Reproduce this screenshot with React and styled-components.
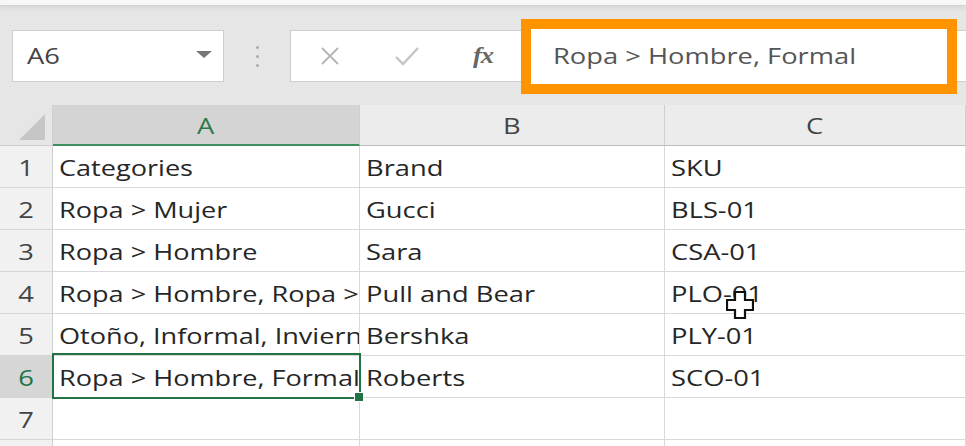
import React from 'react';
import styled, { createGlobalStyle } from 'styled-components';

const Global = createGlobalStyle`
  body {
    margin: 0;
    background: #e6e6e6;
  }
`;

const Window = styled.div`
  width: 966px;
  height: 446px;
  overflow: hidden;
  background: #e6e6e6;
  font-family: 'Open Sans', 'Liberation Sans', sans-serif;
  position: relative;
`;

// the capture is stretched sideways, so glyphs are widened to match
const Wide = styled.span`
  display: inline-block;
  white-space: nowrap;
  transform: scaleX(${(p) => p.$k || 1.3});
  transform-origin: ${(p) => (p.$center ? 'center' : 'left')} center;
`;

const TopStrip = styled.div`
  height: 5px;
  background: #f7f7f7;
  border-bottom: 1px solid #d2d2d2;
  box-shadow: 0 2px 5px rgba(0, 0, 0, 0.08);
`;

const Toolbar = styled.div`
  display: flex;
  align-items: center;
  height: 52px;
  margin-top: 24px;
  padding-left: 12px;
`;

const NameBox = styled.div`
  box-sizing: border-box;
  width: 212px;
  height: 52px;
  background: #fff;
  border: 1px solid #cdcdcd;
  display: flex;
  align-items: center;
  justify-content: space-between;
  padding: 0 11px 0 14px;
  font-size: 21px;
  color: #444;
`;

const Caret = styled.span`
  width: 0;
  height: 0;
  border-left: 8px solid transparent;
  border-right: 8px solid transparent;
  border-top: 7px solid #777;
  margin-bottom: 3px;
`;

const Grip = styled.div`
  width: 66px;
  display: flex;
  flex-direction: column;
  align-items: center;
  gap: 6px;
  span {
    width: 3px;
    height: 3px;
    border-radius: 50%;
    background: #aaa;
  }
`;

const FormulaBar = styled.div`
  flex: 1;
  box-sizing: border-box;
  height: 52px;
  background: #fff;
  border: 1px solid #cdcdcd;
  border-right: none;
  display: flex;
  align-items: center;
`;

const IconSlot = styled.div`
  width: 77px;
  display: flex;
  justify-content: center;
  align-items: center;
`;

const Fx = styled.span`
  font-family: 'Liberation Serif', serif;
  font-style: italic;
  font-weight: bold;
  font-size: 23px;
  color: #666;
  letter-spacing: -1px;
  margin-right: 4px;
`;

const FormulaInput = styled.div`
  box-sizing: border-box;
  width: 416px;
  height: 55px;
  margin-left: 9px;
  background: #fff;
  outline: 10px solid #ff9400;
  display: flex;
  align-items: center;
  padding-left: 22px;
  font-size: 21px;
  color: #555;
`;

const Sheet = styled.div`
  display: grid;
  grid-template-columns: 53px 307px 305px 1fr;
  grid-template-rows: 41px repeat(8, 42px);
  margin-top: 23px;
`;

const Corner = styled.div`
  background: #e6e6e6;
  border-right: 1px solid #cfcfcf;
  border-bottom: 1px solid #cfcfcf;
  display: flex;
  align-items: flex-end;
  justify-content: flex-end;
  padding: 0 7px 5px 0;
  svg {
    display: block;
  }
`;

const ColHead = styled.div`
  background: ${(p) => (p.$active ? '#d4d4d4' : '#ececec')};
  border-right: 1px solid #cfcfcf;
  border-bottom: ${(p) => (p.$active ? '2px solid #3f8f5f' : '1px solid #bdbdbd')};
  display: flex;
  align-items: center;
  justify-content: center;
  font-size: 21px;
  color: ${(p) => (p.$active ? '#2e7a4c' : '#444')};
  padding-top: 2px;
`;

const RowHead = styled.div`
  background: ${(p) => (p.$active ? '#d6d6d6' : '#f1f1f1')};
  border-right: ${(p) => (p.$active ? '1px solid #217346' : '1px solid #cfcfcf')};
  border-bottom: 1px solid #d6d6d6;
  display: flex;
  align-items: flex-end;
  justify-content: center;
  padding-bottom: 5px;
  font-size: 21px;
  color: ${(p) => (p.$active ? '#217346' : '#444')};
`;

const Cell = styled.div`
  position: relative;
  background: #fff;
  border-right: 1px solid #d9d9d9;
  border-bottom: 1px solid #d9d9d9;
  display: flex;
  align-items: flex-end;
  min-width: 0;
  font-size: 21px;
  color: #262626;
  z-index: ${(p) => (p.$selected ? 2 : 1)};
`;

const CellText = styled.div`
  flex: 1;
  min-width: 0;
  overflow: hidden;
  padding: 0 0 5px 6px;
`;

const Selection = styled.div`
  position: absolute;
  left: -1px;
  top: -3px;
  right: -2px;
  bottom: -2px;
  border: 2px solid #217346;
  pointer-events: none;
`;

const Handle = styled.div`
  position: absolute;
  right: -5px;
  bottom: -5px;
  width: 8px;
  height: 8px;
  background: #217346;
  border: 1px solid #fff;
`;

const CursorMark = styled.svg`
  position: absolute;
  left: 726px;
  top: 291px;
  z-index: 5;
`;

const rows = [
  ['Categories', 'Brand', 'SKU'],
  ['Ropa > Mujer', 'Gucci', 'BLS-01'],
  ['Ropa > Hombre', 'Sara', 'CSA-01'],
  ['Ropa > Hombre, Ropa > Mujer', 'Pull and Bear', 'PLO-01'],
  ['Otoño, Informal, Invierno', 'Bershka', 'PLY-01'],
  ['Ropa > Hombre, Formal', 'Roberts', 'SCO-01'],
  ['', '', ''],
  ['', '', ''],
];

export default function App() {
  return (
    <Window>
      <Global />
      <TopStrip />
      <Toolbar>
        <NameBox>
          <Wide>A6</Wide>
          <Caret />
        </NameBox>
        <Grip>
          <span />
          <span />
          <span />
        </Grip>
        <FormulaBar>
          <IconSlot>
            <svg width="20" height="20" viewBox="0 0 20 20">
              <path d="M2 2 L18 18 M18 2 L2 18" stroke="#b4b4b4" strokeWidth="1.8" fill="none" />
            </svg>
          </IconSlot>
          <IconSlot>
            <svg width="26" height="22" viewBox="0 0 26 22">
              <path d="M2 12 L9 19 L24 3" stroke="#c4c4c4" strokeWidth="2.4" fill="none" />
            </svg>
          </IconSlot>
          <IconSlot>
            <Fx>
              <Wide $k={1.15}>fx</Wide>
            </Fx>
          </IconSlot>
          <FormulaInput>
            <Wide>Ropa &gt; Hombre, Formal</Wide>
          </FormulaInput>
        </FormulaBar>
      </Toolbar>
      <Sheet>
        <Corner>
          <svg width="26" height="26" viewBox="0 0 26 26">
            <polygon points="26,0 26,26 0,26" fill="#c6c6c6" />
          </svg>
        </Corner>
        <ColHead $active>
          <Wide $center>A</Wide>
        </ColHead>
        <ColHead>
          <Wide $center>B</Wide>
        </ColHead>
        <ColHead>
          <Wide $center>C</Wide>
        </ColHead>
        {rows.map((r, i) => {
          const active = i === 5;
          return (
            <React.Fragment key={i}>
              <RowHead $active={active}>
                <Wide $center>{i < 7 ? i + 1 : ''}</Wide>
              </RowHead>
              <Cell $selected={active}>
                <CellText>
                  <Wide $k={1.29}>{r[0]}</Wide>
                </CellText>
                {active && (
                  <Selection>
                    <Handle />
                  </Selection>
                )}
              </Cell>
              <Cell>
                <CellText>
                  <Wide>{r[1]}</Wide>
                </CellText>
              </Cell>
              <Cell>
                <CellText>
                  <Wide>{r[2]}</Wide>
                </CellText>
              </Cell>
            </React.Fragment>
          );
        })}
      </Sheet>
      <CursorMark width="28" height="28" viewBox="0 0 28 28">
        <polygon
          points="9,1 19,1 19,9 27,9 27,19 19,19 19,27 9,27 9,19 1,19 1,9 9,9"
          fill="#fff"
          stroke="#111"
          strokeWidth="2.2"
        />
      </CursorMark>
    </Window>
  );
}
